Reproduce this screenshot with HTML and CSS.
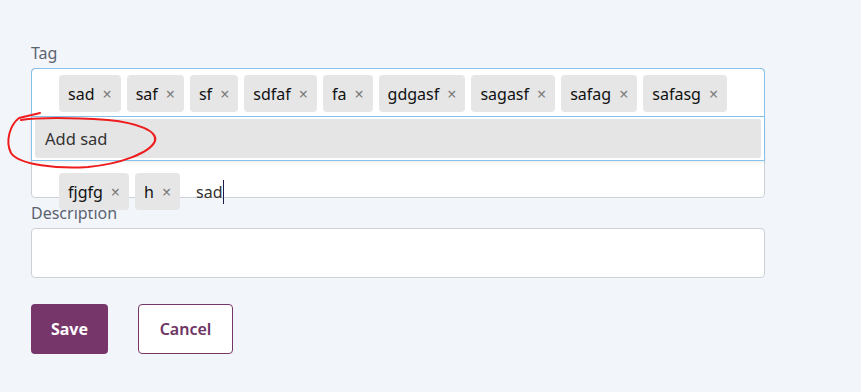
FILE: index.html
```html
<!DOCTYPE html>
<html lang="en">
  <head>
    <meta charset="UTF-8" />
    <meta name="viewport" content="width=device-width, initial-scale=1.0" />
    <title>Tag form</title>
    <link rel="stylesheet" href="styles.css">
  </head>
  <body>
    <form class="form">
      <label class="label">Tag</label>
      <div class="tag_field">
        <div class="focus_ring"></div>
        <div class="tag_list">
          <span class="tag">sad<span class="luk">×</span></span>
          <span class="tag">saf<span class="luk">×</span></span>
          <span class="tag">sf<span class="luk">×</span></span>
          <span class="tag">sdfaf<span class="luk">×</span></span>
          <span class="tag">fa<span class="luk">×</span></span>
          <span class="tag">gdgasf<span class="luk">×</span></span>
          <span class="tag">sagasf<span class="luk">×</span></span>
          <span class="tag">safag<span class="luk">×</span></span>
          <span class="tag">safasg<span class="luk">×</span></span>
          <span class="tag">fjgfg<span class="luk">×</span></span>
          <span class="tag">h<span class="luk">×</span></span>
          <span class="tag_input">sad<span class="caret"></span></span>
        </div>
        <div class="dropdown">
          <div class="dropdown_item">Add sad</div>
        </div>
        <!-- rød markering rundt om forslaget -->
        <svg class="mark" width="170" height="70" viewBox="0 0 170 70">
          <path d="M40,2 L19,7 C10,14 5,30 11,42 C19,54 58,58 88,56 C120,53 150,42 155,30 C158,20 138,12 108,9 C78,7 42,6 21,9" fill="none" stroke="#ee1c1c" stroke-width="2" stroke-linecap="round" stroke-linejoin="round" />
        </svg>
      </div>

      <label class="label label_desc">Description</label>
      <div class="textarea"></div>

      <div class="knapper">
        <button type="button" class="save">Save</button>
        <button type="button" class="cancel">Cancel</button>
      </div>
    </form>
  </body>
</html>
```

FILE: styles.css
```css
body {
  margin: 0;
  padding: 0;
  background-color: #f2f5f9;
  font-family: "Noto Sans", "Open Sans", sans-serif;
}

.form {
  width: 734px;
  padding: 43px 0 0 31px;
}

.label {
  display: block;
  font-size: 16px;
  line-height: 21px;
  color: #5c6370;
  margin-bottom: 4px;
}

.label_desc {
  margin-top: 5px;
}

.tag_field {
  position: relative;
  height: 128px;
  background-color: white;
  border: 1px solid #ccd1d8;
  border-radius: 4px;
}

.focus_ring {
  position: absolute;
  top: -1px;
  left: -1px;
  right: -1px;
  height: 48px;
  border: 1px solid #86c1ea;
  border-radius: 4px 4px 0 0;
}

.tag_list {
  display: flex;
  flex-wrap: wrap;
  align-items: center;
  column-gap: 6px;
  row-gap: 61px;
  padding: 6px 20px 0 27px;
}

.tag {
  display: flex;
  align-items: center;
  height: 37px;
  padding: 0 9px;
  background-color: #e6e6e6;
  border-radius: 4px;
  font-size: 16px;
  color: #111;
}

.luk {
  margin-left: 8px;
  color: #7a7a7a;
  font-size: 16px;
}

.tag_input {
  display: flex;
  align-items: center;
  margin-left: 10px;
  font-size: 16px;
  color: #333;
}

.caret {
  width: 1px;
  height: 24px;
  background-color: #1b1b4d;
}

.dropdown {
  position: absolute;
  top: 47px;
  left: -1px;
  right: -1px;
  height: 39px;
  padding: 2px 3px;
  background-color: white;
  border: 1px solid #86c1ea;
  box-shadow: 0 2px 3px rgba(0, 0, 0, 0.06);
}

.dropdown_item {
  display: flex;
  align-items: center;
  height: 100%;
  padding-left: 10px;
  background-color: #e5e5e5;
  border-radius: 3px;
  font-size: 16.5px;
  color: #333;
}

.mark {
  position: absolute;
  left: -32px;
  top: 42px;
}

.textarea {
  height: 48px;
  background-color: white;
  border: 1px solid #ccd1d8;
  border-radius: 4px;
}

.knapper {
  display: flex;
  gap: 30px;
  margin-top: 26px;
}

button {
  height: 50px;
  border-radius: 4px;
  font-family: "Noto Sans", "Open Sans", sans-serif;
  font-size: 16px;
  cursor: pointer;
}

.save {
  width: 77px;
  background-color: #763669;
  border: none;
  color: white;
  font-weight: bold;
}

.cancel {
  width: 95px;
  background-color: white;
  border: 1px solid #763669;
  color: #6d3464;
  font-weight: 600;
}
```
